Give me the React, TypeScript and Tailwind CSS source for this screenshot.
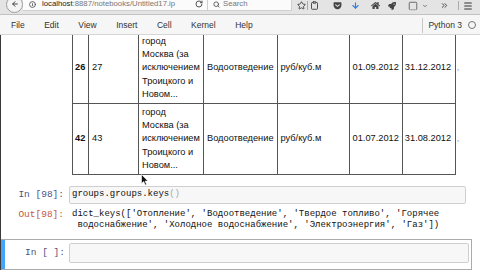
import React from 'react';
import {
  ArrowLeft,
  Info,
  RotateCw,
  Search,
  Star,
  Clipboard,
  ArrowDown,
  SquareDashedBottom,
  ChevronDown,
  ChevronsRight,
  Menu,
} from 'lucide-react';
import { FaGetPocket, FaHome, FaRocket } from 'react-icons/fa';

const rows = [
  { n: '26', i: '27', type: 'Водоотведение', unit: 'руб/куб.м', from: '01.09.2012', to: '31.12.2012' },
  { n: '42', i: '43', type: 'Водоотведение', unit: 'руб/куб.м', from: '01.07.2012', to: '31.08.2012' },
];

const menuItems = ['File', 'Edit', 'View', 'Insert', 'Cell', 'Kernel', 'Help'];

function BrowserBar() {
  return (
    <div className="h-[15px] bg-[#e4e4e4] border-b border-[#c2c2c2] overflow-hidden flex-none">
      <div className="flex items-center h-[11px] text-[7.75px] text-[#333]">
        <div className="ml-[6px] w-[17px] h-[17px] flex-none rounded-full border border-[#9c9c9c] bg-[#f4f4f4] flex items-center justify-center mt-[-2px]">
          <ArrowLeft size={8} strokeWidth={3} className="text-[#444] mt-[-2px]" />
        </div>
        <div className="flex items-center w-[185px] h-[13px] mt-[-2px] bg-[#fbfbfb] border-b border-r border-[#cfcfcf] flex-none">
          <Info size={7} strokeWidth={3} className="ml-[6px] text-[#555]" />
          <span className="ml-[6px] whitespace-nowrap">
            <span className="text-[#222]">localhost</span>
            <span className="text-[#777]">:8887/notebooks/Untitled17.ip</span>
          </span>
          <RotateCw size={8} strokeWidth={3} className="ml-auto mr-[4px] text-[#555]" />
        </div>
        <div className="flex items-center w-[84px] h-[13px] mt-[-2px] bg-[#fbfbfb] border-b border-r border-[#cfcfcf] flex-none">
          <Search size={7} strokeWidth={3} className="ml-[5px] text-[#555]" />
          <span className="ml-[3px] text-[#777]">Search</span>
        </div>
        <Star size={9} strokeWidth={2.5} className="ml-[4.5px] flex-none text-[#444]" />
        <div className="ml-[1.5px] w-px h-[9px] bg-[#aaa] flex-none" />
        <Clipboard size={9} strokeWidth={2.5} className="ml-[1.5px] flex-none text-[#444]" />
        <FaGetPocket size={9} className="ml-[14px] flex-none text-[#444]" />
        <ArrowDown size={9} strokeWidth={3} className="ml-[9px] flex-none text-[#2f7de1]" />
        <FaHome size={9} className="ml-[11px] flex-none text-[#444]" />
        <FaRocket size={8} className="ml-[8px] flex-none text-[#444]" />
        <SquareDashedBottom size={10} strokeWidth={2} className="ml-[12px] flex-none text-[#555]" />
        <ChevronDown size={6} strokeWidth={3} className="ml-[4.5px] flex-none text-[#555]" />
        <ChevronsRight size={9} strokeWidth={2.5} className="ml-[12px] flex-none text-[#444]" />
        <div className="ml-[9px] w-px h-[9px] bg-[#aaa] flex-none" />
        <Menu size={10} strokeWidth={2.5} className="ml-[4px] flex-none text-[#333]" />
      </div>
    </div>
  );
}

function MenuBar() {
  return (
    <div className="h-[20px] bg-[#f6f6f6] border-b border-[#d6d6d6] flex items-center pt-[1px] text-[8.5px] text-[#333] flex-none">
      <div className="flex items-center gap-[19.5px] pl-[11px]">
        {menuItems.map((m) => (
          <span key={m}>{m}</span>
        ))}
      </div>
      <div className="ml-auto flex items-center pr-[4px]">
        <div className="w-px h-[15px] bg-[#c8c8c8]" />
        <span className="ml-[5px]">Python 3</span>
        <div className="ml-[6px] w-[8px] h-[8px] rounded-full border-[1.5px] border-[#777]" />
      </div>
    </div>
  );
}

function Cursor() {
  return (
    <svg className="absolute left-[141px] top-[174px]" width="8" height="12" viewBox="0 0 8 12">
      <path d="M0.5 0.5 L0.5 9.5 L2.7 7.6 L4.2 11 L5.6 10.4 L4.1 7.1 L7 7.1 Z" fill="#111" stroke="#fff" strokeWidth="0.6" />
    </svg>
  );
}

export default function App() {
  const code = "font-['Liberation_Mono',monospace]";
  return (
    <div className="relative w-[480px] h-[270px] overflow-hidden bg-white flex flex-col font-['Liberation_Sans',Arial,sans-serif]">
      <BrowserBar />
      <MenuBar />
      <div className="flex-1 overflow-hidden border-l border-[#3a3a3a]">
        <div className="pl-[71px] mt-[-3px] flex items-stretch">
          <table className="table-fixed border-collapse text-[9.25px] leading-[13.4px] text-[#111]">
            <colgroup>
              <col className="w-[16px]" />
              <col className="w-[50px]" />
              <col className="w-[65px]" />
              <col className="w-[72px]" />
              <col className="w-[72px]" />
              <col className="w-[51px]" />
              <col className="w-[53px]" />
              <col className="w-[6px]" />
            </colgroup>
            <tbody>
              {rows.map((r) => (
                <tr key={r.n}>
                  <td className="border border-[#555] px-[2px] py-[1.5px] align-middle font-bold">{r.n}</td>
                  <td className="border border-[#555] px-[3px] py-[1.5px] align-middle">{r.i}</td>
                  <td className="border border-[#555] px-[3px] py-[1.5px] align-middle whitespace-nowrap">
                    город
                    <br />
                    Москва (за
                    <br />
                    исключением
                    <br />
                    Троицкого и
                    <br />
                    Новом...
                  </td>
                  <td className="border border-[#555] px-[3px] py-[1.5px] align-middle whitespace-nowrap">{r.type}</td>
                  <td className="border border-[#555] px-[3px] py-[1.5px] align-middle whitespace-nowrap">{r.unit}</td>
                  <td className="border border-[#555] px-[3px] py-[1.5px] align-middle whitespace-nowrap">{r.from}</td>
                  <td className="border border-[#555] px-[2px] py-[1.5px] align-middle whitespace-nowrap">{r.to}</td>
                  <td className="pl-[1px] align-middle text-[#999]">,</td>
                </tr>
              ))}
            </tbody>
          </table>
        </div>

        <div className="mt-[11px] flex items-center pr-[14px]">
          <div className={`w-[63px] text-right text-[9.5px] text-[#4b5384] ${code}`}>In [98]:</div>
          <div className="ml-[5px] flex-1 h-[18px] flex items-center bg-[#f7f7f7] border border-[#cfcfcf] rounded-[2px] pl-[2px]">
            <span className={`text-[9px] text-[#111] ${code}`}>
              groups.groups.keys<span className="text-[#a8a8a8]">()</span>
            </span>
          </div>
        </div>

        <div className="mt-[4.5px] flex items-start">
          <div className={`w-[63px] text-right text-[9.5px] leading-[11px] text-[#c4573a] ${code}`}>Out[98]:</div>
          <div className={`ml-[8px] text-[9px] leading-[11px] text-[#111] whitespace-pre ${code}`}>
            {"dict_keys(['Отопление', 'Водоотведение', 'Твердое топливо', 'Горячее\n водоснабжение', 'Холодное водоснабжение', 'Электроэнергия', 'Газ'])"}
          </div>
        </div>

        <div className="mt-[8.5px] ml-[-1px] w-[472px] border border-[#ababab] bg-[linear-gradient(to_right,#42a5f5_0px,#42a5f5_4px,transparent_4px)] pt-[3px] pb-[6px] pr-[2px] flex items-center">
          <div className={`w-[64px] text-right text-[9.5px] text-[#4b5384] ${code}`}>In [ ]:</div>
          <div className="ml-[4px] flex-1 h-[20px] bg-[#f7f7f7] border border-[#cfcfcf] rounded-[2px]" />
        </div>
      </div>
      <Cursor />
    </div>
  );
}
